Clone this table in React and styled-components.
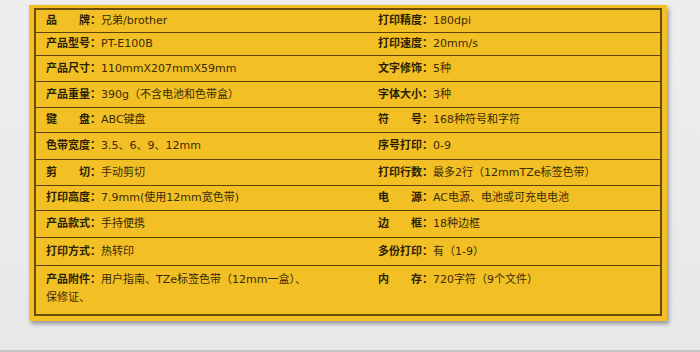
import React from "react";
import styled, { createGlobalStyle } from "styled-components";

const GlobalStyle = createGlobalStyle`
  html, body {
    margin: 0;
    padding: 0;
    background: #e9e9e9;
  }
  body {
    font-family: "DejaVu Sans", "Noto Sans CJK SC", sans-serif;
  }
`;

const Page = styled.div`
  box-sizing: border-box;
  width: 700px;
  height: 352px;
  padding: 5px 0 0 29px;
  background: linear-gradient(#eeeeee, #e8e8e8);
  border-bottom: 2px solid #c6c6c6;
`;

const Panel = styled.div`
  box-sizing: border-box;
  width: 638px;
  padding: 3px 5px 5px 5px;
  background: #f2bf24;
  box-shadow: 2px 3px 4px rgba(0, 0, 0, 0.35);
`;

const Table = styled.div`
  display: flex;
  flex-direction: column;
  border: 2px solid #6a4c0a;
`;

const Row = styled.div`
  box-sizing: border-box;
  display: grid;
  grid-template-columns: 332px 1fr;
  height: ${(p) => p.$h}px;
  border-top: ${(p) => (p.$first ? "none" : "1px solid #5c430b")};
`;

const Cell = styled.div`
  display: flex;
  align-items: ${(p) => (p.$top ? "flex-start" : "center")};
  padding: ${(p) => (p.$top ? "5px 0 0 10px" : "0 0 0 10px")};
  font-size: 11px;
  line-height: 18px;
  color: #3a2c08;
  white-space: nowrap;
`;

const Text = styled.div``;

const Label = styled.span`
  font-weight: bold;
  color: #2a1f05;
`;

const Value = styled.span`
  font-weight: normal;
`;

const rows = [
  { h: 22, l: ["品\u3000\u3000牌：", "兄弟/brother"], r: ["打印精度：", "180dpi"] },
  { h: 23, l: ["产品型号：", "PT-E100B"], r: ["打印速度：", "20mm/s"] },
  { h: 26, l: ["产品尺寸：", "110mmX207mmX59mm"], r: ["文字修饰：", "5种"] },
  { h: 26, l: ["产品重量：", "390g（不含电池和色带盒）"], r: ["字体大小：", "3种"] },
  { h: 25, l: ["键\u3000\u3000盘：", "ABC键盘"], r: ["符\u3000\u3000号：", "168种符号和字符"] },
  { h: 27, l: ["色带宽度：", "3.5、6、9、12mm"], r: ["序号打印：", "0-9"] },
  { h: 26, l: ["剪\u3000\u3000切：", "手动剪切"], r: ["打印行数：", "最多2行（12mmTZe标签色带）"] },
  { h: 25, l: ["打印高度：", "7.9mm(使用12mm宽色带)"], r: ["电\u3000\u3000源：", "AC电源、电池或可充电电池"] },
  { h: 27, l: ["产品款式：", "手持便携"], r: ["边\u3000\u3000框：", "18种边框"] },
  { h: 28, l: ["打印方式：", "热转印"], r: ["多份打印：", "有（1-9）"] },
];

export default function App() {
  return (
    <>
      <GlobalStyle />
      <Page>
        <Panel>
          <Table>
            {rows.map((row, i) => (
              <Row key={i} $h={row.h} $first={i === 0}>
                <Cell>
                  <Text>
                    <Label>{row.l[0]}</Label>
                    <Value>{row.l[1]}</Value>
                  </Text>
                </Cell>
                <Cell>
                  <Text>
                    <Label>{row.r[0]}</Label>
                    <Value>{row.r[1]}</Value>
                  </Text>
                </Cell>
              </Row>
            ))}
            <Row $h={49}>
              <Cell $top>
                <Text>
                  <Label>产品附件：</Label>
                  <Value>用户指南、TZe标签色带（12mm一盒）、</Value>
                  <br />
                  <Value>保修证、</Value>
                </Text>
              </Cell>
              <Cell $top>
                <Text>
                  <Label>内{"\u3000\u3000"}存：</Label>
                  <Value>720字符（9个文件）</Value>
                </Text>
              </Cell>
            </Row>
          </Table>
        </Panel>
      </Page>
    </>
  );
}
